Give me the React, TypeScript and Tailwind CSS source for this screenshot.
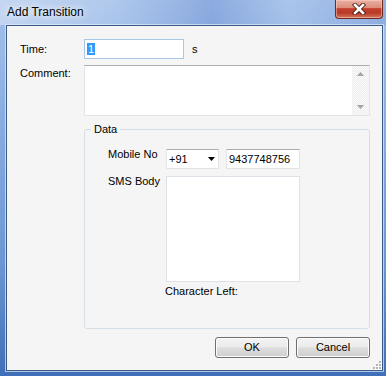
import React from "react";

function CloseButton() {
  return (
    <div className="w-[48px] h-[19px] flex items-center justify-center rounded-b-[4px] border border-t-0 border-[#6e2b21] bg-[linear-gradient(180deg,#eab1a3_0%,#dd8f7c_42%,#c4402d_48%,#b93a27_72%,#d5775d_100%)] shadow-[inset_0_0_0_1px_rgba(255,220,210,0.45)]">
      <svg width="14" height="12" viewBox="0 0 14 12">
        <path d="M3 2 L11 10 M11 2 L3 10" stroke="#4a1a12" strokeWidth="4.4" strokeLinecap="square" />
        <path d="M3 2 L11 10 M11 2 L3 10" stroke="#ffffff" strokeWidth="2.6" strokeLinecap="square" />
      </svg>
    </div>
  );
}

function Arrow({ dir, color }: { dir: "up" | "down"; color: string }) {
  return (
    <svg width="7" height="4" viewBox="0 0 7 4">
      {dir === "up" ? <path d="M0 4 L3.5 0 L7 4 Z" fill={color} /> : <path d="M0 0 L7 0 L3.5 4 Z" fill={color} />}
    </svg>
  );
}

function WinButton({ label }: { label: string }) {
  return (
    <button className="w-[74px] h-[21px] rounded-[3px] border border-[#707070] bg-[linear-gradient(180deg,#f3f3f3_0%,#ebebeb_48%,#dddddd_52%,#cfcfcf_100%)] shadow-[inset_0_0_0_1px_#fcfcfc] text-[11px] leading-[13px] text-black">
      {label}
    </button>
  );
}

export default function App() {
  return (
    <div className="w-[386px] h-[376px] flex flex-col font-['Liberation_Sans',Arial,sans-serif] bg-[linear-gradient(180deg,#a6c2ea_0%,#8aaee2_30%,#6c96d4_70%,#3f6fb8_100%)]">
      <div className="h-[25px] flex justify-between items-start pl-[7px] pr-[3px] bg-[linear-gradient(90deg,rgba(255,255,255,0.35)_0%,rgba(255,255,255,0.1)_30%,rgba(40,80,180,0.2)_55%,rgba(255,255,255,0.05)_75%,rgba(40,80,180,0.15)_100%)]">
        <span className="mt-[4px] text-[12px] leading-[16px] text-black [text-shadow:0_0_6px_#fff,0_0_10px_#fff]">Add Transition</span>
        <CloseButton />
      </div>
      <div className="relative ml-[6px] w-[377px] h-[346px] border border-[#3a5a88] shadow-[0_0_0_1px_rgba(225,236,250,0.7)] bg-[#f5f5f5] text-[11px] leading-[13px] text-black">
        <div className="mt-[13px] pl-[13px] flex items-center h-[20px]">
          <span className="w-[64px]">Time:</span>
          <div className="w-[100px] h-[20px] bg-white border border-[#a9c7e6] flex items-center pl-[2px]">
            <span className="bg-[#3399ff] text-white px-[1px] leading-[12px]">1</span>
          </div>
          <span className="ml-[8px]">s</span>
        </div>
        <div className="mt-[6px] pl-[13px] flex items-start">
          <span className="w-[64px] pt-[2px]">Comment:</span>
          <div className="w-[286px] h-[51px] bg-white border border-[#e2e4ea] border-t-[#abadb3] flex justify-end">
            <div className="w-[17px] h-full flex flex-col items-center justify-between py-[6px] bg-[repeating-conic-gradient(#ececec_0_25%,#fbfbfb_0_50%)] bg-[length:2px_2px]">
              <Arrow dir="up" color="#a3a3a3" />
              <Arrow dir="down" color="#a3a3a3" />
            </div>
          </div>
        </div>
        <div className="relative ml-[77px] mt-[13px] w-[286px] h-[200px] border border-[#d5dfe5] rounded-[3px] pt-[19px] pl-[23px]">
          <span className="absolute top-[-7px] left-[6px] px-[3px] bg-[#f5f5f5]">Data</span>
          <div className="flex items-start">
            <span className="w-[58px] mt-[-1px]">Mobile No</span>
            <div className="w-[53px] h-[20px] bg-white border border-[#e2e4ea] border-t-[#abadb3] flex items-center justify-between pl-[2px] pr-[3px]">
              <span>+91</span>
              <Arrow dir="down" color="#000" />
            </div>
            <div className="ml-[7px] w-[74px] h-[20px] bg-white border border-[#e2e4ea] border-t-[#abadb3] flex items-center pl-[2px]">
              9437748756
            </div>
          </div>
          <div className="mt-[7px] flex items-start">
            <span className="w-[58px] mt-[-1px]">SMS Body</span>
            <div className="w-[134px] h-[106px] bg-white border border-[#dfe2e8]" />
          </div>
          <div className="mt-[3px] ml-[57px]">Character Left:</div>
        </div>
        <div className="mt-[8px] pr-[12px] flex justify-end gap-[7px]">
          <WinButton label="OK" />
          <WinButton label="Cancel" />
        </div>
        <svg className="absolute right-[0px] bottom-[0px]" width="10" height="10" viewBox="0 0 10 10">
          {[
            [7, 1],
            [4, 4],
            [7, 4],
            [1, 7],
            [4, 7],
            [7, 7],
          ].map(([x, y], i) => (
            <g key={i}>
              <rect x={x + 1} y={y + 1} width="2" height="2" fill="#ffffff" />
              <rect x={x} y={y} width="2" height="2" fill="#b4b4b4" />
            </g>
          ))}
        </svg>
      </div>
    </div>
  );
}
